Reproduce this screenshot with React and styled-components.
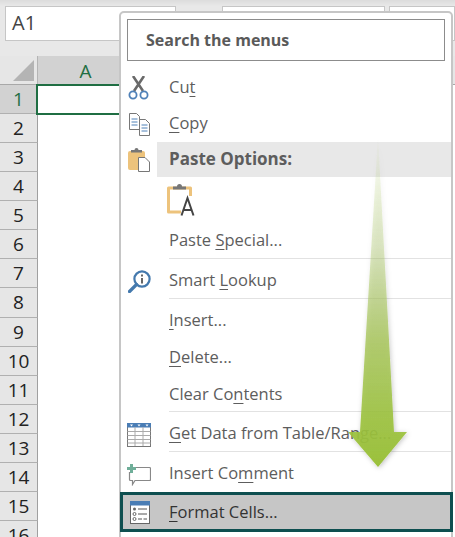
import React from 'react';
import styled, { createGlobalStyle } from 'styled-components';

const GlobalStyle = createGlobalStyle`
  html, body { margin: 0; padding: 0; background: #fff; }
  body { font-family: "Open Sans", "Noto Sans", "Liberation Sans", sans-serif; }
`;

/* sheet */
const Sheet = styled.div`
  position: relative;
  width: 455px;
  height: 537px;
  overflow: hidden;
  background: #fff;
`;

const FormulaBar = styled.div`
  display: flex;
  height: 56px;
  box-sizing: border-box;
  padding: 6px 0 0 5px;
  background: linear-gradient(#dcdcdc, #e8e8e8 6px);
`;

const FieldBox = styled.div`
  box-sizing: border-box;
  width: ${p => p.$w}px;
  height: 35px;
  margin-right: ${p => p.$gap || 0}px;
  padding-left: 6px;
  background: #fff;
  border: 1px solid #c6c6c6;
  color: #444;
  font-size: 20px;
  line-height: 32px;
`;

const HeaderRow = styled.div`
  display: flex;
  height: 28px;
  background: #e6e6e6;
  border-bottom: 1px solid #a8a8a8;
  box-sizing: content-box;
`;

const Corner = styled.div`
  width: 37px;
  border-right: 1px solid #b4b4b4;
  box-sizing: content-box;
  svg { display: block; }
`;

const ColumnHead = styled.div`
  width: 95px;
  background: #d2d2d2;
  color: #1f6e43;
  font-size: 19px;
  line-height: 30px;
  text-align: center;
`;

const Body = styled.div`
  position: relative;
`;

const RowHead = styled.div`
  box-sizing: border-box;
  width: 38px;
  height: 29.07px;
  background: ${p => (p.$active ? '#d2d2d2' : '#e6e6e6')};
  border-right: 1px solid #a0a0a0;
  border-bottom: 1px solid #b0b0b0;
  color: ${p => (p.$active ? '#1f6e43' : '#222')};
  font-size: 19px;
  line-height: 28px;
  text-align: center;
`;

const ActiveCell = styled.div`
  position: absolute;
  left: 36px;
  top: -1px;
  width: 110px;
  height: 31px;
  box-sizing: border-box;
  border: 2px solid #1f6e43;
`;

/* context menu */
const Menu = styled.div`
  position: absolute;
  left: 119px;
  top: 11px;
  width: 334px;
  height: 540px;
  box-sizing: border-box;
  background: #fff;
  border: 2px solid #c6c6c6;
  border-radius: 5px 5px 0 0;
`;

const SearchBox = styled.div`
  box-sizing: border-box;
  height: 42px;
  margin: 6px 6px 8px 6px;
  padding-left: 18px;
  border: 1px solid #8c8c8c;
  color: #5a5a5a;
  font-size: 16px;
  font-weight: 700;
  line-height: 40px;
`;

const Item = styled.div`
  display: flex;
  align-items: center;
  box-sizing: border-box;
  height: ${p => p.$h || 37}px;
  padding-top: ${p => p.$pad || 0}px;
  color: #5d5d5d;
  font-size: 16.5px;
`;

const IconSlot = styled.div`
  display: flex;
  justify-content: center;
  align-items: center;
  flex: none;
  width: ${p => p.$w || 36}px;
  margin-right: ${p => (p.$flush ? 0 : 12)}px;
`;

const Label = styled.span`
  margin-top: ${p => p.$shift ?? -3}px;
`;

const Key = styled.span`
  text-decoration: underline;
  text-underline-offset: 3px;
  text-decoration-thickness: 1px;
`;

const GroupHead = styled.div`
  display: flex;
  align-items: center;
  height: 35px;
`;

const GroupTitle = styled.div`
  flex: 1;
  height: 35px;
  padding-left: 12px;
  background: #e8e8e8;
  color: #5d5d5d;
  font-size: 17px;
  font-weight: 700;
  line-height: 33px;
`;

const PasteChoices = styled.div`
  height: 46px;
  padding: 6px 0 0 46px;
  box-sizing: border-box;
`;

const Divider = styled.div`
  height: 1px;
  margin-left: 48px;
  background: #e2e2e2;
`;

const Selected = styled(Item)`
  height: 40px;
  margin-right: -2px;
  background: #c6c6c6;
  border: 3px solid #0e4f50;
  color: #333;
  margin-left: -1px;
`;

const Arrow = styled.svg`
  position: absolute;
  left: 335px;
  top: 130px;
  pointer-events: none;
`;

const CutIcon = () => (
  <svg width="22" height="24" viewBox="0 0 22 24">
    <path d="M5 0 L15 15 M16 0 L6 15" stroke="#6a6a6a" strokeWidth="2.6" fill="none" />
    <circle cx="5" cy="19" r="3.6" fill="none" stroke="#4f81b8" strokeWidth="1.8" />
    <circle cx="16" cy="19" r="3.6" fill="none" stroke="#4f81b8" strokeWidth="1.8" />
  </svg>
);

const CopyIcon = () => (
  <svg width="21" height="23" viewBox="0 0 21 23">
    <path d="M.5.5h7l3 3v13H.5z" fill="#fff" stroke="#777" />
    <path d="M2.500 6h6M2.500 9h6M2.500 12h6" stroke="#4f81b8" />
    <path d="M10.500 6.500h6l4 4v12h-10z" fill="#fff" stroke="#777" />
    <path d="M12.500 12h6M12.500 15h6M12.500 18h6" stroke="#4f81b8" />
  </svg>
);

const PasteIcon = () => (
  <svg width="22" height="24" viewBox="0 0 22 24">
    <rect x="0" y="3" width="17" height="19" rx="2" fill="#edc37c" />
    <path d="M3 4.500h11V2H10.500a2 2 0 0 0-4 0H3z" fill="#777" />
    <path d="M10.500 9.500h6.500l4.500 4.500v9.500h-11z" fill="#fff" stroke="#777" />
  </svg>
);

const PasteTextIcon = () => (
  <svg width="28" height="33" viewBox="0 0 28 33">
    <path d="M1.500 5h22v24h-22z" fill="none" stroke="#edc37c" strokeWidth="3" strokeLinejoin="round" />
    <path d="M6 6.500h13V3.500h-4a2.500 2.500 0 0 0-5 0H6z" fill="#777" />
    <rect x="14" y="13" width="14" height="20" fill="#fff" />
    <path d="M14.500 32.500 L20.500 15 L26.500 32.500 M16.500 27 H24.500" fill="none" stroke="#444" strokeWidth="2" />
  </svg>
);

const LookupIcon = () => (
  <svg width="23" height="23" viewBox="0 0 23 23">
    <circle cx="14" cy="9" r="7.600" fill="none" stroke="#4479ad" strokeWidth="2.200" />
    <path d="M8.500 14.500 L1.500 21.500" stroke="#4479ad" strokeWidth="3.200" strokeLinecap="round" />
    <path d="M14 8v5.500" stroke="#666" strokeWidth="2" />
    <rect x="13" y="4.500" width="2" height="2" fill="#666" />
  </svg>
);

const TableIcon = () => (
  <svg width="24" height="24" viewBox="0 0 24 24">
    <rect x=".5" y=".5" width="23" height="23" fill="#fff" stroke="#777" />
    <rect x="0" y="0" width="24" height="4.500" fill="#4a7db5" />
    <path d="M.5 8.500h23M.5 12.500h23M.5 16.500h23M.5 20h23M8 4v19M16 4v19" stroke="#aaa" />
    <path d="M3 1.500h3L4.500 3.500zM10.500 1.500h3L12 3.500zM18.500 1.500h3L20 3.500z" fill="#fff" />
  </svg>
);

const CommentIcon = () => (
  <svg width="24" height="22" viewBox="0 0 24 22">
    <path d="M9 3.500h13.500a1 1 0 0 1 1 1v11a1 1 0 0 1-1 1H8l-2.500 4v-4H3.500a1 1 0 0 1-1-1V8" fill="none" stroke="#888" strokeWidth="1.200" />
    <path d="M0 4.500h9M4.500 0v9" stroke="#6fae99" strokeWidth="3" />
  </svg>
);

const FormatIcon = () => (
  <svg width="20" height="23" viewBox="0 0 20 23">
    <rect x=".5" y=".5" width="19" height="22" fill="#fff" stroke="#666" />
    <rect x="0" y="0" width="20" height="4.500" fill="#4a7db5" />
    <circle cx="4.500" cy="8" r="1.500" fill="#666" />
    <circle cx="4.500" cy="13" r="1.500" fill="none" stroke="#666" />
    <circle cx="4.500" cy="18" r="1.500" fill="none" stroke="#666" />
    <path d="M8 8h9M8 13h9M8 18h4M13.500 18h3.500" stroke="#555" />
  </svg>
);

const ROW_COUNT = 16;

export default function App() {
  return (
    <Sheet>
      <GlobalStyle />
      <FormulaBar>
        <FieldBox $w={171} $gap={46}>A1</FieldBox>
        <FieldBox $w={163} $gap={4} />
        <FieldBox $w={66} />
      </FormulaBar>
      <HeaderRow>
        <Corner>
          <svg width="37" height="28" viewBox="0 0 37 28">
            <path d="M34 4V25H13z" fill="#b4b4b4" />
          </svg>
        </Corner>
        <ColumnHead>A</ColumnHead>
      </HeaderRow>
      <Body>
        {Array.from({ length: ROW_COUNT }, (_, i) => (
          <RowHead key={i} $active={i === 0}>{i + 1}</RowHead>
        ))}
        <ActiveCell />
      </Body>

      <Menu>
        <SearchBox>Search the menus</SearchBox>
        <Item>
          <IconSlot><CutIcon /></IconSlot>
          <Label>Cu<Key>t</Key></Label>
        </Item>
        <Item $h={36}>
          <IconSlot><CopyIcon /></IconSlot>
          <Label><Key>C</Key>opy</Label>
        </Item>
        <GroupHead>
          <IconSlot $flush><PasteIcon /></IconSlot>
          <GroupTitle>Paste Options:</GroupTitle>
        </GroupHead>
        <PasteChoices><PasteTextIcon /></PasteChoices>
        <Item $h={35}>
          <IconSlot />
          <Label>Paste <Key>S</Key>pecial...</Label>
        </Item>
        <Divider />
        <Item $h={39} $pad={6}>
          <IconSlot><LookupIcon /></IconSlot>
          <Label $shift={-5}>Smart <Key>L</Key>ookup</Label>
        </Item>
        <Divider />
        <Item $h={40} $pad={3}>
          <IconSlot />
          <Label><Key>I</Key>nsert...</Label>
        </Item>
        <Item>
          <IconSlot />
          <Label><Key>D</Key>elete...</Label>
        </Item>
        <Item $h={35} $pad={2}>
          <IconSlot />
          <Label>Clear Co<Key>n</Key>tents</Label>
        </Item>
        <Divider />
        <Item $h={39} $pad={6}>
          <IconSlot><TableIcon /></IconSlot>
          <Label $shift={-5}><Key>G</Key>et Data from Table/Range...</Label>
        </Item>
        <Divider />
        <Item $h={40} $pad={6}>
          <IconSlot><CommentIcon /></IconSlot>
          <Label $shift={-5}>Insert Co<Key>m</Key>ment</Label>
        </Item>
        <Selected>
          <IconSlot $w={34}><FormatIcon /></IconSlot>
          <Label $shift={-1}><Key>F</Key>ormat Cells...</Label>
        </Selected>
      </Menu>

      <Arrow width="90" height="345" viewBox="335 130 90 345">
        <defs>
          <linearGradient id="arrowFill" x1="0" y1="0" x2="0" y2="1">
            <stop offset="0" stopColor="#9bc13c" stopOpacity="0" />
            <stop offset="0.33" stopColor="#a9c566" stopOpacity="0.35" />
            <stop offset="0.62" stopColor="#a5c455" stopOpacity="0.8" />
            <stop offset="0.84" stopColor="#9bc13c" stopOpacity="0.88" />
            <stop offset="1" stopColor="#9bc13c" />
          </linearGradient>
          <filter id="arrowShadow" x="-30%" y="-5%" width="160%" height="110%">
            <feDropShadow dx="1" dy="1" stdDeviation="2.500" floodColor="#000" floodOpacity="0.25" />
          </filter>
        </defs>
        <path d="M378 137 L394 432 H407 L378 467 L348 432 H360 Z" fill="url(#arrowFill)" filter="url(#arrowShadow)" />
      </Arrow>
    </Sheet>
  );
}
